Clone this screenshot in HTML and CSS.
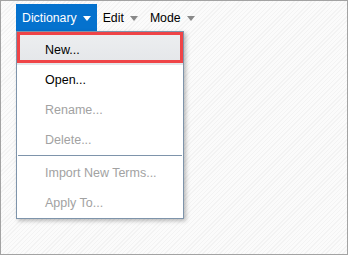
FILE: index.html
```html
<!DOCTYPE html>
<html lang="en">
<head>
  <meta charset="UTF-8" />
  <title>Dictionary Menu</title>
  <link rel="stylesheet" href="styles.css">
</head>
<body>
  <div class="frame">
    <!-- Menu bar -->
    <div class="menubar">
      <div class="menu-wrap">
        <div class="menu-btn open">Dictionary <span class="caret"></span></div>

        <!-- Dropdown -->
        <div class="dropdown">
          <div class="item active">New...</div>
          <div class="item">Open...</div>
          <div class="item disabled">Rename...</div>
          <div class="item disabled">Delete...</div>
          <div class="sep"></div>
          <div class="item disabled">Import New Terms...</div>
          <div class="item disabled">Apply To...</div>
        </div>
      </div>
      <div class="menu-btn">Edit <span class="caret"></span></div>
      <div class="menu-btn">Mode <span class="caret"></span></div>
    </div>
  </div>
</body>
</html>
```

FILE: styles.css
```css
/* ===== Base ===== */
html, body {
  margin: 0;
  padding: 0;
}
body {
  font-family: "Liberation Sans", Arial, sans-serif;
  font-size: 12px;
  color: #000;
}
.frame {
  box-sizing: border-box;
  width: 348px;
  height: 255px;
  border: 1px solid #a3a3a3;
  background: repeating-linear-gradient(135deg, #f3f3f3 0 1px, #fbfbfb 1px 3px);
  padding: 3px 0 0 15px;
}

/* ===== Menu bar ===== */
.menubar {
  display: flex;
  height: 27px;
}
.menu-wrap {
  position: relative;
}
.menu-btn {
  display: flex;
  align-items: center;
  gap: 6px;
  height: 27px;
  padding: 0 6px;
  color: #000;
  font-size: 12.3px;
}
.menu-btn.open {
  background: #0572ce;
  color: #fff;
}
.caret {
  width: 0;
  height: 0;
  border-left: 4px solid transparent;
  border-right: 4px solid transparent;
  border-top: 5px solid #888;
  margin-top: 1px;
}
.menu-btn.open .caret {
  border-top-color: #fff;
}

/* ===== Dropdown ===== */
.dropdown {
  position: absolute;
  top: 27px;
  left: 0;
  width: 166px;
  border: 1px solid #7e94ab;
  background: #fff;
  padding-top: 3px;
  box-shadow: 2px 2px 4px rgba(0, 0, 0, 0.25);
  z-index: 2;
}
.item {
  height: 30px;
  line-height: 30px;
  padding-left: 28px;
  color: #000;
  font-size: 12.5px;
  white-space: nowrap;
}
.item.disabled {
  color: #a2a2a2;
}
.item.active {
  position: relative;
  background: linear-gradient(#eceef0, #e4e6e9);
}
.item.active::after {
  content: "";
  position: absolute;
  left: 0;
  right: 0;
  top: -3px;
  bottom: 2px;
  border: 3px solid #ef4447;
}
.sep {
  height: 1px;
  margin: 0 1px 2px;
  background: #7e94ab;
}
```
